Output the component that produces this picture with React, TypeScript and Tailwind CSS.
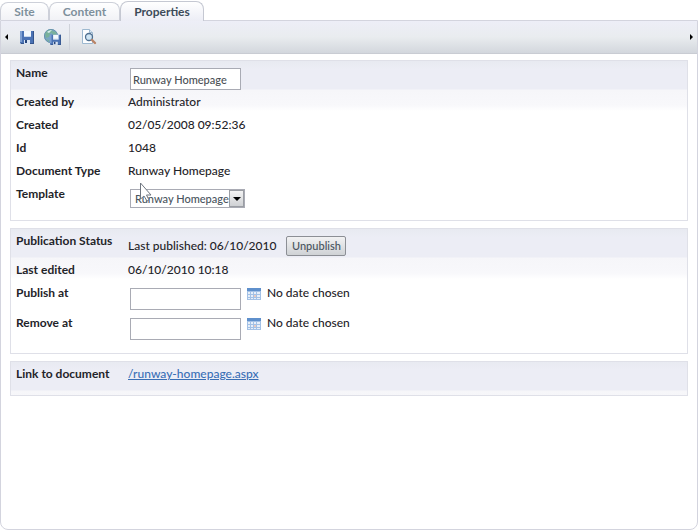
import type { ReactNode } from "react";

const tabs = [
  { name: "Site", size: "w-[49px]" },
  { name: "Content", size: "w-[71px]" },
  { name: "Properties", size: "w-[84px]" },
];

function Floppy() {
  return (
    <g>
      <path d="M0 1h14v13H1l-1-1z" fill="#4a72b4" />
      <path d="M0 1h2v11H0z" fill="#7d9fd2" />
      <path d="M1 13h13v1H1zM13 1h1v13h-1z" fill="#34548c" />
      <path d="M4 1h7v6H4z" fill="#f3f8fd" />
      <path d="M4 6h7v1H4z" fill="#c6d7ec" />
      <path d="M4 10h6v4H4z" fill="#dbe5f3" />
      <path d="M5 10h2v3H5z" fill="#27457b" />
    </g>
  );
}

function SaveIcon() {
  return (
    <svg width="15" height="15" viewBox="0 0 15 15" aria-hidden="true">
      <Floppy />
    </svg>
  );
}

function PublishIcon() {
  return (
    <svg width="18" height="18" viewBox="0 0 18 18" aria-hidden="true">
      <circle cx="8" cy="8" r="7" fill="#7aa6c6" />
      <circle cx="8" cy="8" r="6.5" fill="none" stroke="#6790ad" />
      <path d="M2 6c1-3 4-5 7-4l1 2-3 2-1 3-3 1zM10 3l3 1 1 3-3 1-2-2zM3 11l3 1v2z" fill="#79b19b" />
      <path d="M4 4c1-1 3-2 5-2L6 5z" fill="#d9edf0" />
      <g transform="translate(7 6) scale(0.78)">
        <Floppy />
      </g>
    </svg>
  );
}

function PreviewIcon() {
  return (
    <svg width="18" height="18" viewBox="0 0 18 18" aria-hidden="true">
      <path d="M2.500 1.500h7l3 3v11h-10z" fill="#fbfdff" stroke="#9db8d0" />
      <path d="M9.500 1.500v3h3" fill="#dce8f2" stroke="#9db8d0" />
      <circle cx="9" cy="9" r="3.500" fill="#cfe5f4" stroke="#4f6f90" strokeWidth="1.300" />
      <path d="M12 12l3 3" stroke="#b98468" strokeWidth="2.400" strokeLinecap="round" />
    </svg>
  );
}

function CalendarIcon() {
  return (
    <svg width="14" height="12" viewBox="0 0 14 12" aria-hidden="true">
      <path d="M0 0h14v12H0z" fill="#a3c1e6" />
      <path d="M0 0h14v3H0z" fill="#5f90cc" />
      <path d="M1 4h2v2H1zM4 4h2v2H4zM7 4h2v2H7zM10 4h3v2h-3zM1 7h2v2H1zM4 7h2v2H4zM10 7h3v2h-3zM1 10h2v1H1zM4 10h2v1H4zM7 10h2v1H7zM10 10h3v1h-3z" fill="#e6effa" />
      <path d="M7 7h2v2H7z" fill="#e9c9c0" />
    </svg>
  );
}

function Panel({ children }: { children: ReactNode }) {
  return (
    <section className="border border-[#dfe0e8] bg-white bg-[linear-gradient(#e8eaf1_0px,#ecedf5_8px,#ecedf5_28px,#f6f6f9_29px,#f8f8fb_44px,#ffffff_50px)] px-[5px] pt-[3px]">
      {children}
    </section>
  );
}

function Row({ label, size, htmlFor, children }: { label: string; size: string; htmlFor?: string; children: ReactNode }) {
  return (
    <div className={`flex items-start ${size}`}>
      {htmlFor ? (
        <label htmlFor={htmlFor} className="w-[112px] shrink-0 whitespace-nowrap font-bold">
          {label}
        </label>
      ) : (
        <span className="w-[112px] shrink-0 whitespace-nowrap font-bold">{label}</span>
      )}
      <div className="min-w-0">{children}</div>
    </div>
  );
}

function DateField({ id }: { id: string }) {
  return (
    <div className="flex items-start">
      <input id={id} className="mt-1 ml-0.5 h-[22px] w-[111px] border border-[#a9abb4] bg-white px-1 text-[11px]" />
      <button type="button" aria-label="Choose date" className="mt-1 ml-1.5">
        <CalendarIcon />
      </button>
      <span className="ml-1.5">No date chosen</span>
    </div>
  );
}

export default function App() {
  return (
    <div className="flex min-h-screen flex-col bg-white font-[Lato,sans-serif] text-[12px] leading-[18px] font-medium text-[#1f2429]">
      <div role="tablist" className="flex h-[20px] items-end">
        {tabs.map((tab) =>
          tab.name === "Properties" ? (
            <button key={tab.name} role="tab" aria-selected="true" className={`relative -mb-px h-[20px] rounded-t-lg border border-b-0 border-[#c5c8d2] bg-linear-to-b from-white to-[#ecedf5] font-bold text-[#3c4b59] ${tab.size}`}>
              {tab.name}
            </button>
          ) : (
            <button key={tab.name} role="tab" aria-selected="false" className={`h-[18px] rounded-t-lg border border-b-0 border-[#cdd0d9] bg-linear-to-b from-white to-[#f1f2f6] leading-[16px] font-bold text-[#7e909c] ${tab.size}`}>
              {tab.name}
            </button>
          ),
        )}
      </div>
      <div className="flex grow flex-col rounded-b-lg border border-[#d3d4de]">
        <div className="flex h-[33px] items-center border-b border-[#c9ccd3] bg-linear-to-b from-[#edeef7] via-[#e9ecef] to-[#d3d7dd] px-1">
          <button type="button" aria-label="Scroll left" className="h-0 w-0 border-y-3 border-r-3 border-y-transparent border-r-black" />
          <button type="button" aria-label="Save" className="ml-3">
            <SaveIcon />
          </button>
          <button type="button" aria-label="Save and publish" className="ml-2">
            <PublishIcon />
          </button>
          <span className="ml-2 h-[26px] border-l border-[#cfd2da]" />
          <button type="button" aria-label="Preview" className="ml-2.5">
            <PreviewIcon />
          </button>
          <button type="button" aria-label="Scroll right" className="ml-auto h-0 w-0 border-y-3 border-l-3 border-y-transparent border-l-black" />
        </div>
        <div className="flex flex-col gap-[7px] px-[9px] pt-[6px] pb-4">
          <Panel>
            <Row label="Name" size="h-[29px]" htmlFor="name">
              <input id="name" defaultValue="Runway Homepage" className="mt-1 ml-0.5 block h-[22px] w-[111px] border border-[#a9abb4] bg-white px-0.5 text-[11px] text-[#4a4f55]" />
            </Row>
            <Row label="Created by" size="h-[23px]">Administrator</Row>
            <Row label="Created" size="h-[23px]">02/05/2008 09:52:36</Row>
            <Row label="Id" size="h-[23px]">1048</Row>
            <Row label="Document Type" size="h-[23px]">Runway Homepage</Row>
            <Row label="Template" size="h-[35px]" htmlFor="template">
              <div className="relative mt-1 ml-0.5">
                <select id="template" defaultValue="Runway Homepage" className="block h-[19px] w-[115px] appearance-none border border-[#a9abb4] bg-white pl-1 text-[11px] leading-[17px] text-[#4a5560]">
                  <option>Runway Homepage</option>
                </select>
                <span className="pointer-events-none absolute top-px right-px flex h-[17px] w-[15px] items-center justify-center border border-[#9a9da3] bg-linear-to-b from-[#f3f3f3] to-[#cfd1d4]">
                  <span className="border-x-4 border-t-4 border-x-transparent border-t-black" />
                </span>
                <svg className="pointer-events-none absolute -top-[7px] left-2" width="14" height="22" viewBox="0 0 14 22" aria-hidden="true">
                  <path d="M2.500 1v16l3.500-3 3 5 2-1-2.500-5h4.500z" fill="#fff" stroke="#6f7680" />
                </svg>
              </div>
            </Row>
          </Panel>
          <Panel>
            <Row label="Publication Status" size="h-[29px]">
              <div className="flex items-center pt-1">
                <span>Last published: 06/10/2010</span>
                <button type="button" className="ml-2.5 h-5 w-[60px] rounded-xs border border-[#8c8f95] bg-linear-to-b from-[#f2f2f3] to-[#cfd2d5] text-[11px] leading-[18px] text-[#4a5560]">
                  Unpublish
                </button>
              </div>
            </Row>
            <Row label="Last edited" size="h-[23px]">06/10/2010 10:18</Row>
            <Row label="Publish at" size="h-[30px]" htmlFor="publish-at">
              <DateField id="publish-at" />
            </Row>
            <Row label="Remove at" size="h-[39px]" htmlFor="remove-at">
              <DateField id="remove-at" />
            </Row>
          </Panel>
          <Panel>
            <Row label="Link to document" size="h-[30px]">
              <a href="/runway-homepage.aspx" className="text-[#3a6fb5] underline">
                /runway-homepage.aspx
              </a>
            </Row>
          </Panel>
        </div>
      </div>
    </div>
  );
}
